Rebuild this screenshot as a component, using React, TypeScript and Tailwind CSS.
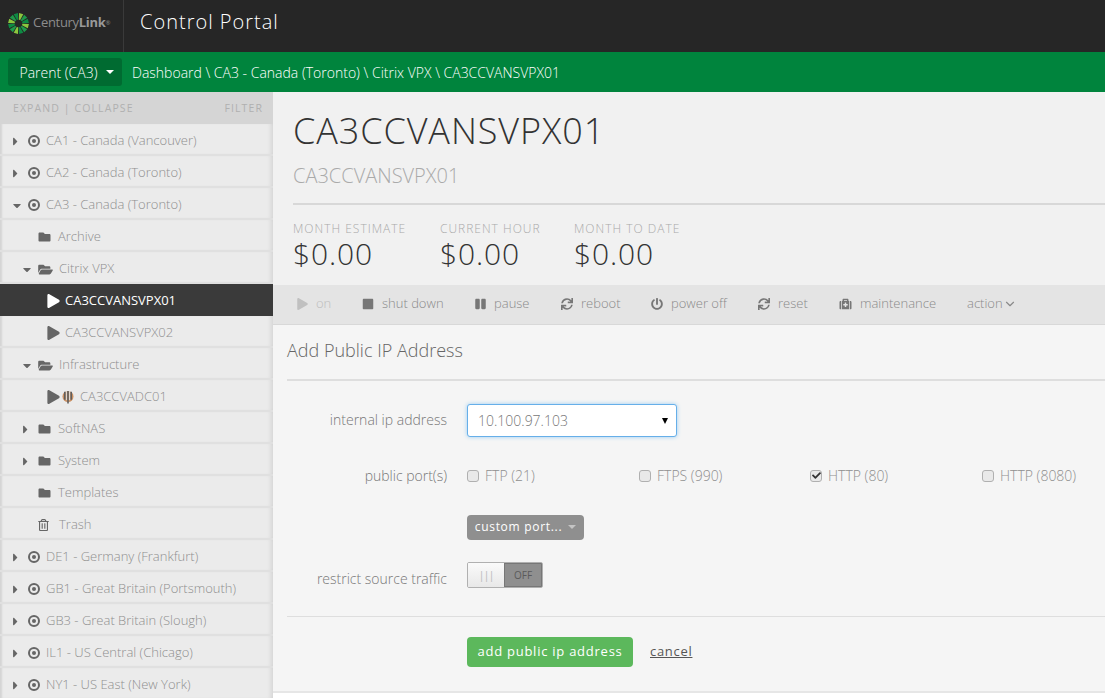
import { ChevronDown } from "lucide-react";
import {
  FaCaretDown,
  FaCaretRight,
  FaCheck,
  FaFolder,
  FaFolderOpen,
  FaMedkit,
  FaPause,
  FaPlay,
  FaPowerOff,
  FaRegTrashAlt,
  FaStop,
  FaSync,
} from "react-icons/fa";

// Starburst logo, the wedges alternate between two greens
function Logo() {
  const rays = Array.from({ length: 12 }, (_, i) => i * 30 + 15);
  return (
    <svg width="21" height="21" viewBox="-10.5 -10.5 21 21" className="shrink-0">
      {rays.map((deg, i) => (
        <polygon
          key={deg}
          points="-0.7,-3.8 0.7,-3.8 2.2,-10.2 -2.2,-10.2"
          fill={i % 3 === 0 ? "#8cc63f" : i % 3 === 1 ? "#1f9a4a" : "#0d8a43"}
          transform={`rotate(${deg})`}
        />
      ))}
    </svg>
  );
}

function AdcIcon() {
  return (
    <svg width="12" height="13" viewBox="0 0 12 13" className="shrink-0">
      <circle cx="6" cy="5.5" r="5.5" fill="#c98f62" />
      <path d="M2.8 0.8v8M6 0v12.5M9.2 0.8v8" stroke="#5f5f5f" strokeWidth="1.6" fill="none" />
      <path d="M4.4 0.2v9M7.6 0.2v9" stroke="#e6e6e6" strokeWidth="0.9" fill="none" />
    </svg>
  );
}

function DotCircle() {
  return (
    <svg width="12" height="12" viewBox="0 0 12 12" className="shrink-0 mr-[6px]">
      <circle cx="6" cy="6" r="5" fill="none" stroke="#666" strokeWidth="2" />
      <circle cx="6" cy="6" r="2" fill="#666" />
    </svg>
  );
}

function Caret({ open }: { open?: boolean }) {
  return open ? (
    <FaCaretDown className="w-[8px] h-[13px] text-[#666]" />
  ) : (
    <FaCaretRight className="w-[5px] h-[13px] text-[#666]" />
  );
}

function DataRow({ label, caret }: { label: string; caret: "open" | "closed" }) {
  return (
    <TreeRow className="pl-[13px]">
      <span className="w-[15px] flex justify-start">
        <Caret open={caret === "open"} />
      </span>
      <DotCircle />
      <span>{label}</span>
    </TreeRow>
  );
}

function FolderRow({
  label,
  caret,
  open,
}: {
  label: string;
  caret?: "open" | "closed";
  open?: boolean;
}) {
  return (
    <TreeRow className="pl-[23px]">
      <span className="w-[15px] flex justify-start">{caret && <Caret open={caret === "open"} />}</span>
      {open ? (
        <FaFolderOpen className="w-[15px] h-[13px] text-[#666] mr-[6px]" />
      ) : (
        <FaFolder className="w-[13px] h-[12px] text-[#666] mr-[7px]" />
      )}
      <span>{label}</span>
    </TreeRow>
  );
}

function TreeRow({ className, children }: { className: string; children: React.ReactNode }) {
  return (
    <div
      className={`h-[32px] pt-[4px] flex items-center border-b-2 border-[#e0e0e0] text-[13px] text-[#8f8f8f] font-light shadow-[inset_3px_0_2px_-1px_#d4d4d4,inset_-5px_0_4px_-3px_#d4d4d4] ${className}`}
    >
      {children}
    </div>
  );
}

function Sidebar() {
  return (
    <aside className="w-[273px] shrink-0 bg-[#ebebeb] overflow-hidden">
      <div className="h-[32px] pt-[1px] bg-[#d5d5d5] flex items-center justify-between pl-[13px] pr-[10px] text-[10.5px] tracking-[1.1px] text-[#b0b0b0]">
        <span>EXPAND | COLLAPSE</span>
        <span>FILTER</span>
      </div>
      <DataRow label="CA1 - Canada (Vancouver)" caret="closed" />
      <DataRow label="CA2 - Canada (Toronto)" caret="closed" />
      <DataRow label="CA3 - Canada (Toronto)" caret="open" />
      <FolderRow label="Archive" />
      <FolderRow label="Citrix VPX" caret="open" open />
      <div className="h-[32px] pt-[2px] flex items-center bg-[#3a3a3a] pl-[47px] text-[13px] text-white">
        <FaPlay className="w-[13px] h-[14px] mr-[5px]" />
        <span>CA3CCVANSVPX01</span>
      </div>
      <TreeRow className="pl-[47px]">
        <FaPlay className="w-[13px] h-[14px] text-[#666] mr-[5px]" />
        <span>CA3CCVANSVPX02</span>
      </TreeRow>
      <FolderRow label="Infrastructure" caret="open" open />
      <TreeRow className="pl-[47px]">
        <FaPlay className="w-[13px] h-[14px] text-[#666] mr-[2px]" />
        <AdcIcon />
        <span className="ml-[6px]">CA3CCVADC01</span>
      </TreeRow>
      <FolderRow label="SoftNAS" caret="closed" />
      <FolderRow label="System" caret="closed" />
      <FolderRow label="Templates" />
      <TreeRow className="pl-[38px]">
        <FaRegTrashAlt className="w-[11px] h-[12px] text-[#666] mr-[10px]" />
        <span>Trash</span>
      </TreeRow>
      <DataRow label="DE1 - Germany (Frankfurt)" caret="closed" />
      <DataRow label="GB1 - Great Britain (Portsmouth)" caret="closed" />
      <DataRow label="GB3 - Great Britain (Slough)" caret="closed" />
      <DataRow label="IL1 - US Central (Chicago)" caret="closed" />
      <DataRow label="NY1 - US East (New York)" caret="closed" />
    </aside>
  );
}

function Stat({ label, className }: { label: string; className: string }) {
  return (
    <div className={className}>
      <div className="text-[12px] leading-[16px] tracking-[1px] text-[#aaa] font-light">{label}</div>
      <div className="text-[30px] leading-[34px] tracking-[0.9px] font-light text-[#333]">$0.00</div>
    </div>
  );
}

function Action({
  icon,
  label,
  className,
  muted,
}: {
  icon: React.ReactNode;
  label: string;
  className: string;
  muted?: boolean;
}) {
  return (
    <div className={`flex items-center ${className}`}>
      {icon}
      <span className={muted ? "text-[#bdbdbd]" : "text-[#8a8a8a]"}>{label}</span>
    </div>
  );
}

function Checkbox({ label, checked, className }: { label: string; checked?: boolean; className: string }) {
  return (
    <div className={`flex items-center ${className}`}>
      <span className="w-[12px] h-[12px] rounded-[3px] border border-[#b0b0b0] bg-[#e9e9e9] flex items-center justify-center mr-[6px]">
        {checked && <FaCheck className="w-[9px] h-[9px] text-[#333]" />}
      </span>
      <span className="text-[14px] text-[#8f8f8f] font-light">{label}</span>
    </div>
  );
}

function FormLabel({ children, className }: { children: React.ReactNode; className: string }) {
  return <div className={`w-[160px] mr-[20px] text-right text-[14px] text-[#777] font-light ${className}`}>{children}</div>;
}

export default function App() {
  return (
    <div className="w-[1105px] h-[698px] overflow-hidden bg-white font-['Open_Sans',sans-serif]">
      <header className="h-[52px] bg-[#262626] flex items-center">
        <div className="w-[124px] h-full flex items-center pl-[8px] pb-[6px] border-r border-[#3a3a3a]">
          <Logo />
          <span className="ml-[4px] text-[13px] text-[#8c8c8c] tracking-[-0.3px] whitespace-nowrap">
            Century<b className="font-bold text-[#999]">Link</b>
            <span className="text-[6px] align-middle">®</span>
          </span>
        </div>
        <div className="ml-[16px] pb-[8px] text-[20px] tracking-[1px] text-white font-light">Control Portal</div>
      </header>

      <nav className="h-[40px] bg-[#00843d] flex items-center pl-[8px] font-light">
        <div className="w-[114px] h-[28px] pl-[3px] rounded-[3px] bg-[#006b31] flex items-center justify-center text-[14px] text-white">
          Parent (CA3)
          <span className="ml-[8px] w-0 h-0 border-x-[4px] border-x-transparent border-t-[4px] border-t-white" />
        </div>
        <div className="ml-[10px] text-[14px] text-white">Dashboard \ CA3 - Canada (Toronto) \ Citrix VPX \ CA3CCVANSVPX01</div>
      </nav>

      <div className="flex h-[606px]">
        <Sidebar />
        <main className="flex-1 min-w-0 bg-white">
          <section className="h-[193px] bg-[#f1f1f1] pl-[20px] pt-[14px]">
            <h1 className="text-[36px] leading-[50px] tracking-[0.9px] font-light text-[#333]">CA3CCVANSVPX01</h1>
            <h2 className="mt-[6px] text-[20px] leading-[28px] font-light text-[#aaa]">CA3CCVANSVPX01</h2>
            <div className="mt-[13px] h-[2px] bg-[#d8d8d8]" />
            <div className="flex mt-[16px]">
              <Stat label="MONTH ESTIMATE" className="w-[147px]" />
              <Stat label="CURRENT HOUR" className="w-[134px]" />
              <Stat label="MONTH TO DATE" className="w-[130px]" />
            </div>
          </section>

          <div className="h-[40px] pb-[2px] bg-[#e4e4e4] border-b border-[#d8d8d8] pl-[24px] flex items-center text-[13px] font-light">
            <Action muted label="on" className="w-[65px]" icon={<FaPlay className="w-[11px] h-[12px] text-[#c0c0c0] mr-[8px]" />} />
            <Action label="shut down" className="w-[113px]" icon={<FaStop className="w-[12px] h-[12px] text-[#777] mr-[8px]" />} />
            <Action label="pause" className="w-[86px]" icon={<FaPause className="w-[11px] h-[12px] text-[#777] mr-[8px]" />} />
            <Action label="reboot" className="w-[90px]" icon={<FaSync className="w-[12px] h-[12px] text-[#777] mr-[8px]" />} />
            <Action label="power off" className="w-[107px]" icon={<FaPowerOff className="w-[12px] h-[12px] text-[#777] mr-[8px]" />} />
            <Action label="reset" className="w-[81px]" icon={<FaSync className="w-[12px] h-[12px] text-[#777] mr-[8px]" />} />
            <Action label="maintenance" className="w-[128px]" icon={<FaMedkit className="w-[13px] h-[12px] text-[#777] mr-[8px]" />} />
            <div className="flex items-center text-[#8a8a8a]">
              action
              <ChevronDown className="w-[14px] h-[14px]" />
            </div>
          </div>

          <section className="h-[368px] bg-[#f5f5f5] border-b-2 border-[#e6e6e6] pl-[14px]">
            <div className="h-[56px] pb-[4px] border-b-2 border-[#dedede] flex items-center text-[18px] font-light text-[#666]">
              Add Public IP Address
            </div>
            <div className="flex items-center mt-[23px]">
              <FormLabel className="pb-[2px]">internal ip address</FormLabel>
              <div className="w-[210px] h-[33px] rounded-[3px] bg-white border border-[#66afe9] shadow-[0_0_4px_#9bcdf2] flex items-center justify-between pl-[10px] pr-[8px] text-[14px] font-light text-[#777]">
                10.100.97.103
                <span className="w-0 h-0 border-x-[3.5px] border-x-transparent border-t-[6px] border-t-black" />
              </div>
            </div>
            <div className="flex items-center mt-[28px]">
              <FormLabel className="">public port(s)</FormLabel>
              <Checkbox label="FTP (21)" className="w-[172px]" />
              <Checkbox label="FTPS (990)" className="w-[171px]" />
              <Checkbox label="HTTP (80)" checked className="w-[172px]" />
              <Checkbox label="HTTP (8080)" className="w-[110px] shrink-0" />
            </div>
            <div className="ml-[180px] mt-[29px] pb-[1px] w-[117px] h-[25px] rounded-[4px] bg-[#8f8f8f] flex items-center justify-center text-[12px] tracking-[0.7px] text-white">
              custom port...
              <span className="ml-[6px] w-0 h-0 border-x-[4.5px] border-x-transparent border-t-[4px] border-t-[#c4c4c4]" />
            </div>
            <div className="flex items-start mt-[22px]">
              <FormLabel className="pt-[6px]">restrict source traffic</FormLabel>
              <div className="flex h-[26px] w-[76px] rounded-[2px] overflow-hidden border border-[#b0b0b0]">
                <div className="w-[36px] bg-gradient-to-b from-[#fafafa] to-[#e8e8e8] flex items-center justify-center text-[11px] tracking-[-1px] text-[#bbb]">
                  |||
                </div>
                <div className="flex-1 bg-[#8f8f8f] border border-[#777] flex items-center justify-center text-[10px] text-[#5a5a5a]">
                  OFF
                </div>
              </div>
            </div>
            <div className="mt-[27px] h-[1px] bg-[#dedede]" />
            <div className="flex items-center mt-[20px] ml-[180px]">
              <div className="w-[166px] h-[30px] rounded-[4px] bg-[#5cb85c] flex items-center justify-center text-[13px] tracking-[0.75px] text-white">
                add public ip address
              </div>
              <a className="ml-[17px] text-[13px] tracking-[0.7px] text-[#555] underline">cancel</a>
            </div>
          </section>
        </main>
      </div>
    </div>
  );
}
